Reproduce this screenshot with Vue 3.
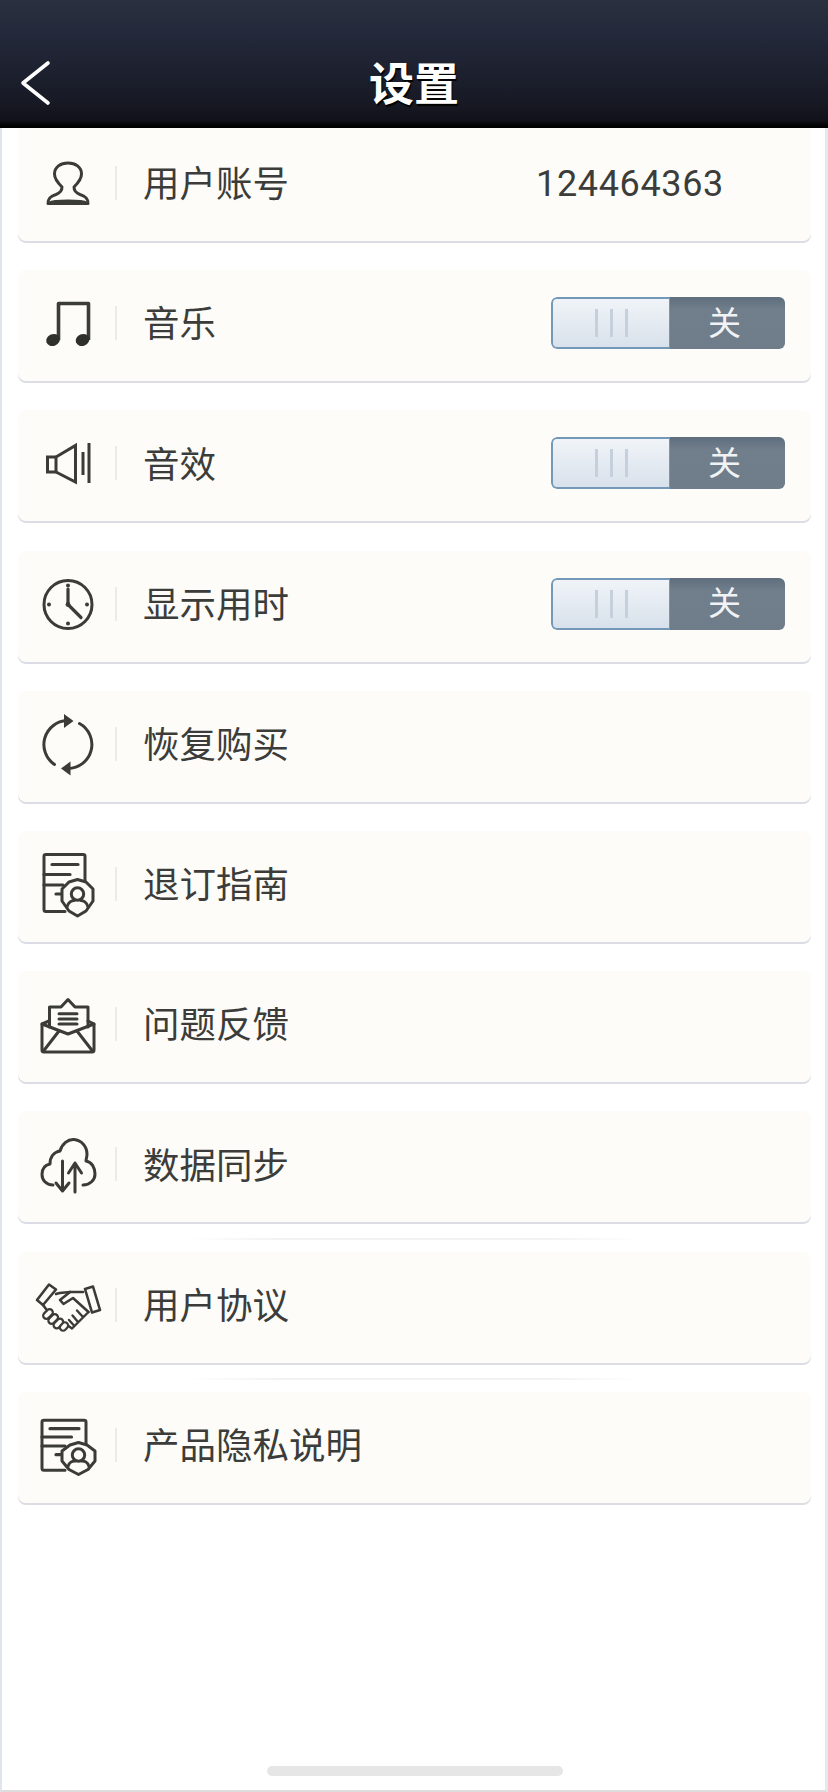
<template>
  <div class="screen">
    <header class="topbar">
      <button class="back" aria-label="返回">
        <svg viewBox="0 0 40 50" width="40" height="50" fill="none" stroke="#fff" stroke-width="3.6" stroke-linecap="round" stroke-linejoin="round">
          <path d="M30 5 L5 25 L30 45" />
        </svg>
      </button>
      <h1 class="title">设置</h1>
    </header>

    <main class="page">
      <section class="list">
        <div v-for="row in rows" :key="row.icon" class="card" :class="{ glow: row.glow }">
          <svg class="icon" viewBox="0 0 70 70" fill="none" stroke="#3b3b38" stroke-width="3" stroke-linecap="round" stroke-linejoin="round">
            <g v-if="row.icon === 'user'">
              <path d="M29 37 C25 33 21.5 29 21.5 24 C21.5 17 27.5 13 35 13 C42.5 13 48.5 17 48.5 24 C48.5 29 45 33 41 37 C41 41 43 43 47 44.5 C52 46 55 48 55 53.5 L15 53.5 C15 48 18 46 23 44.5 C27 43 29 41 29 37 Z" />
              <path d="M16 53 C21 50 49 50 54 53" stroke-width="2.4" />
            </g>
            <g v-else-if="row.icon === 'music'" stroke-width="3.6" stroke-linecap="butt">
              <path d="M25.5 50 V13.5 H55.5 V50" />
              <ellipse cx="20" cy="50" rx="7" ry="5.8" transform="rotate(-22 20 50)" fill="#2f2f2c" stroke="none" />
              <ellipse cx="49.5" cy="50" rx="7" ry="5.8" transform="rotate(-22 49.5 50)" fill="#2f2f2c" stroke="none" />
            </g>
            <g v-else-if="row.icon === 'sound'" stroke-width="3" stroke-linecap="butt" stroke-linejoin="miter">
              <path d="M23 27 H14.5 V42 H23 Z" />
              <path d="M23 27 L42.5 15.5 V52 L23 42" />
              <path d="M50 22 V45 M56 13 V53" />
            </g>
            <g v-else-if="row.icon === 'clock'">
              <circle cx="35" cy="33.5" r="24" />
              <path d="M35 18 V33.5 L48 46.5" stroke-width="3.2" />
              <circle cx="35" cy="33.5" r="2.4" fill="#3b3b38" stroke="none" />
              <g fill="#3b3b38" stroke="none">
                <circle cx="35" cy="14.5" r="2" />
                <circle cx="35" cy="52.5" r="2" />
                <circle cx="16" cy="33.5" r="2" />
                <circle cx="54" cy="33.5" r="2" />
              </g>
            </g>
            <g v-else-if="row.icon === 'restore'">
              <path d="M21.5 53.5 A24 24 0 0 1 34 9.6" />
              <path d="M46.5 12.5 A24 24 0 0 1 35 57.5" />
              <path d="M31 3 L40.5 10 L31 17 Z" fill="#3b3b38" stroke="none" />
              <path d="M37.5 50.5 L28 57.5 L37.5 64.5 Z" fill="#3b3b38" stroke="none" />
            </g>
            <g v-else-if="row.icon === 'refund'">
              <path d="M32 60.5 H13 Q11 60.5 11 58.5 V5 Q11 3.5 13 3.5 H50 Q52 3.5 52 5 V30" />
              <path d="M19 13.5 H45 M11 23.5 H37 M11 34 H30 M23 43 H31" stroke-width="3.2" />
              <path d="M44.5 28.5 L53 31 L60 38 V50 L53 60 L44.5 65 L36 60 L29 50 V38 L36 31 Z" fill="#fdfcf8" />
              <circle cx="44.5" cy="43" r="6.2" />
              <path d="M34 56 C35 51 39 49.5 41 49.5 M55 56 C54 51 50 49.5 48 49.5" />
            </g>
            <g v-else-if="row.icon === 'mail'">
              <path d="M16 30 L9 33 V59 Q9 61 11 61 H59 Q61 61 61 59 V33 L55 30" />
              <path d="M16.5 36 V16 H28 L35 8.5 L42 16 H55 V36" />
              <path d="M9 33 L35 43 L61 33" />
              <path d="M10.5 60 L26 40 M59.5 60 L44 40" />
              <path d="M26 22.7 H44 M26 28 H44 M26 33 H44" />
            </g>
            <g v-else-if="row.icon === 'cloud'">
              <path d="M20 54 C13 54 9 49 9 43.5 C9 38 12 34 17 33 C17 26 21 21 27 20 C29 13 35 8 41 8.5 C48 9 54 15 54 23 C54 26 53 28 53 30 C59 31 62 37 62 43 C62 49 57 54 50 54" />
              <path d="M29.5 30 V60 M23 52 L29.5 60 L36 52" />
              <path d="M42 61 V32 M35.5 42 L42 32 L48.5 42" />
            </g>
            <g v-else-if="row.icon === 'shake'" stroke-width="2.6">
              <path d="M4 28 L16 12.5 L23 17.5 L10 33 Z" />
              <path d="M52 17 L60 14.5 L67 38 L59 40.5 Z" />
              <path d="M23 22 C28 20 33 21 37 20 H50" />
              <path d="M10 33 L13 37" />
              <path d="M37 20 L27 28 L30.5 32 L40 26 L55.5 40" />
              <path d="M55.5 40 L39 56.5 L35.5 54 M44 38.5 L50 45 M39.5 43.5 L45 50 M36 48 L40.5 53" stroke-width="2.4" />
              <g fill="#fdfcf8" stroke-width="2.2">
                <rect x="11.8" y="36.5" width="6.4" height="11" rx="3.2" transform="rotate(45 15 42)" />
                <rect x="17" y="41.5" width="6.4" height="11" rx="3.2" transform="rotate(45 20.2 47)" />
                <rect x="22.2" y="46" width="6.4" height="11" rx="3.2" transform="rotate(45 25.4 51.5)" />
                <rect x="27.8" y="50" width="6.4" height="9" rx="3.2" transform="rotate(45 31 54.5)" />
              </g>
            </g>
            <g v-else-if="row.icon === 'privacy'">
              <path d="M32 58.3 H11 Q9 58.3 9 56.3 V10 Q9 8.3 11 8.3 H51 Q53 8.3 53 10 V33" />
              <path d="M17 16.7 H46 M9 25 H38.5 M9 34 H32 M23 42.7 H32" stroke-width="3.2" />
              <path d="M45.5 30.5 L54 33 L62 39 V49 L55 57.5 L45.5 62.5 L36 57.5 L29 49 V39 L37 33 Z" fill="#fdfcf8" />
              <circle cx="45.5" cy="43" r="6.2" />
              <path d="M35 54.5 C36 50 40 49 42 49 M56 54.5 C55 50 51 49 49 49" />
            </g>
          </svg>
          <span class="divider"></span>
          <span class="label">{{ row.label }}</span>
          <span v-if="row.value" class="value">{{ row.value }}</span>
          <div v-if="row.toggle" class="toggle">
            <div class="knob"><i></i><i></i><i></i></div>
            <div class="state">关</div>
          </div>
        </div>
      </section>
      <div class="home-bar"></div>
    </main>
  </div>
</template>

<script setup>
const rows = [
  { icon: 'user', label: '用户账号', value: '124464363' },
  { icon: 'music', label: '音乐', toggle: true },
  { icon: 'sound', label: '音效', toggle: true },
  { icon: 'clock', label: '显示用时', toggle: true },
  { icon: 'restore', label: '恢复购买' },
  { icon: 'refund', label: '退订指南' },
  { icon: 'mail', label: '问题反馈' },
  { icon: 'cloud', label: '数据同步' },
  { icon: 'shake', label: '用户协议', glow: true },
  { icon: 'privacy', label: '产品隐私说明', glow: true }
]
</script>

<style>
html, body {
  margin: 0;
  background: #fff;
}
</style>

<style scoped>
.screen {
  width: 828px;
  height: 1792px;
  display: flex;
  flex-direction: column;
  overflow: hidden;
  font-family: "Noto Sans CJK SC", "Noto Sans", sans-serif;
  color: #3c3c3a;
}

.topbar {
  flex: none;
  height: 128px;
  box-sizing: border-box;
  padding-top: 34px;
  position: relative;
  display: flex;
  align-items: center;
  justify-content: center;
  background: linear-gradient(to bottom, #2b3040 0%, #23283a 30%, #171924 80%, #11121a 94%, #000 99%);
}

.back {
  position: absolute;
  left: 18px;
  top: 58px;
  padding: 0;
  border: 0;
  background: none;
  display: flex;
}

.title {
  margin: 0;
  font-size: 45px;
  font-weight: 700;
  line-height: 1;
  color: #fff;
  text-shadow: 1px 2px 1px #000;
}

.page {
  flex: 1;
  display: flex;
  flex-direction: column;
  box-sizing: border-box;
  padding: 0 14px 14px 16px;
  background: #fff;
  border-left: 2px solid #dfe4ee;
  border-right: 3px solid #e6e8ee;
  border-bottom: 2px solid #dddddd;
}

.list {
  display: flex;
  flex-direction: column;
  gap: 29.2px;
}

.card {
  position: relative;
  height: 111px;
  box-sizing: border-box;
  padding: 0 26px 5px 15px;
  display: flex;
  align-items: center;
  background: #fdfcf8;
  border-radius: 8px;
  box-shadow: 0 2px 0 #dcdde4;
}

.card:first-child {
  height: 113px;
  padding-top: 2px;
  border-radius: 0 0 8px 8px;
}

.card.glow::before {
  content: "";
  position: absolute;
  left: 170px;
  right: 172px;
  top: -14px;
  height: 2px;
  background: linear-gradient(to right, transparent, #f2f2f4 20%, #f2f2f4 80%, transparent);
}

.icon {
  flex: none;
  width: 70px;
  height: 70px;
  margin-top: 4px;
}

.divider {
  flex: none;
  width: 2px;
  height: 34px;
  margin: 0 26px 0 12px;
  background: #ecebe6;
}

.label {
  font-size: 36.5px;
  line-height: 1;
  margin-top: -1px;
}

.value {
  margin-left: auto;
  margin-right: 61px;
  margin-top: 2px;
  font-family: Roboto, sans-serif;
  font-size: 36px;
  letter-spacing: 0.65px;
  line-height: 1;
}

.toggle {
  margin-left: auto;
  width: 234px;
  height: 52px;
  display: flex;
  border-radius: 6px;
  overflow: hidden;
}

.knob {
  width: 119px;
  box-sizing: border-box;
  display: flex;
  align-items: center;
  justify-content: center;
  gap: 12px;
  background: linear-gradient(to bottom, #f0f4f8, #d8e1eb);
  border: 2px solid #7398b8;
  border-right-width: 1px;
  border-radius: 6px 0 0 6px;
}

.knob i {
  width: 3px;
  height: 28px;
  background: #c5d0dc;
}

.state {
  flex: 1;
  display: flex;
  align-items: center;
  justify-content: center;
  padding: 0 6px 4px 0;
  box-sizing: border-box;
  font-size: 33px;
  line-height: 1;
  color: #f0f2f4;
  background: linear-gradient(to bottom, #5f6e7c, #717f8d 25%, #6f7d8b);
}

.home-bar {
  width: 296px;
  height: 10px;
  margin: auto auto 0;
  border-radius: 5px;
  background: #e6e6e6;
}
</style>
